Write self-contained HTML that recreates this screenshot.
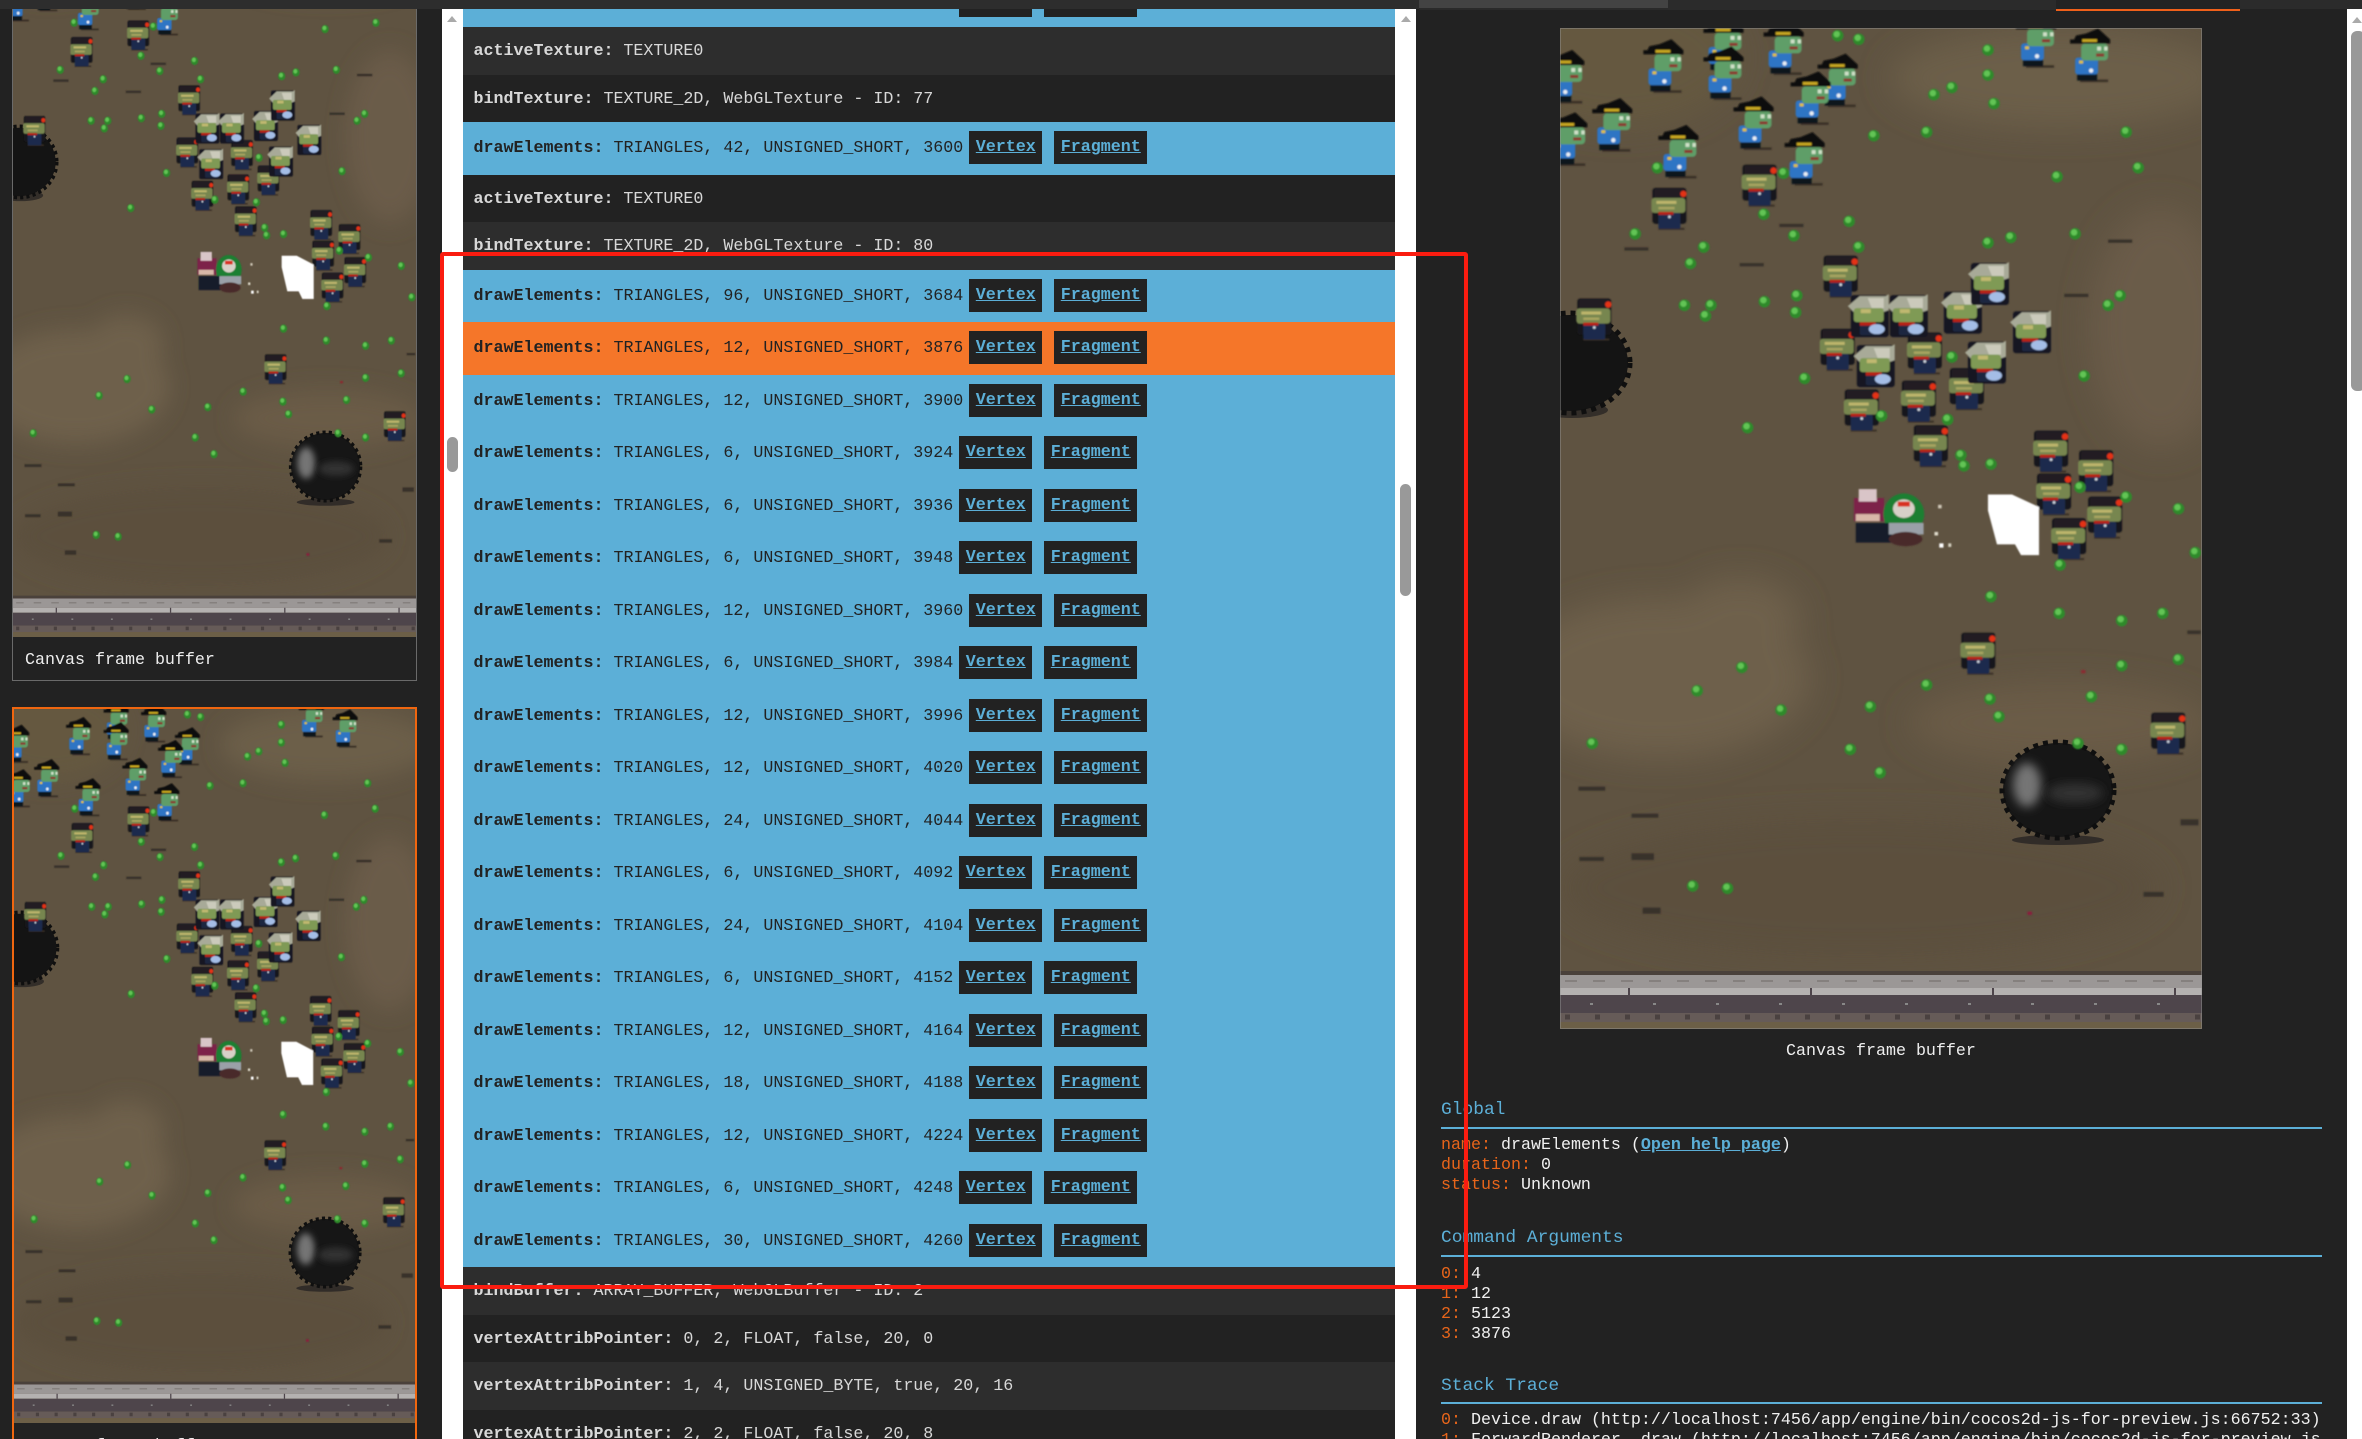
<!DOCTYPE html>
<html><head><meta charset="utf-8"><title>Spector capture</title>
<style>
html,body{margin:0;padding:0;background:#222;width:2362px;height:1439px;overflow:hidden}
body{position:relative;font-family:"Liberation Mono",monospace;color:#eee}
.a{position:absolute}
#list{position:absolute;left:463px;top:-25.5px;width:932px;height:1480px;overflow:hidden;font-size:16.67px}
.r{padding-left:10.5px;box-sizing:border-box;overflow:hidden;white-space:pre}
.d1,.d2{height:47.5px;line-height:49px;color:#d8d8d8}
.d1{background:#2d2d2d}.d2{background:#222}
.b,.o{height:52.5px;line-height:54px;color:#222}
.b{background:#5cafd7}.o{background:#f57629}
.r i{font-style:normal;display:inline-block;height:33px;line-height:33px;padding:0 6.5px;margin-left:6px;background:#222;color:#5cafd7;font-weight:bold;text-decoration:underline;vertical-align:middle}
.r i+i{margin-left:12px}
.sb{position:absolute;background:#fff}
.th{position:absolute;background:#999;border-radius:6px}
.ar{position:absolute;width:0;height:0;border-left:5px solid transparent;border-right:5px solid transparent;border-bottom:6px solid #aaa}
.h{position:absolute;left:1441px;font-size:17.9px;color:#5cafd7;line-height:24px;white-space:pre}
.l{position:absolute;left:1441px;width:881px;height:2px;background:#5cafd7}
.t{position:absolute;left:1441px;font-size:16.67px;line-height:20px;white-space:pre;color:#f0f0f0}
.t s{text-decoration:none;color:#e8651a}
.t u{color:#5cafd7;font-weight:bold}
.c{position:absolute;font-size:16.67px;color:#eee;white-space:pre;line-height:22px}
</style></head><body>

<svg width="0" height="0" style="position:absolute">
<defs>
<filter id="bl" x="-30%" y="-30%" width="160%" height="160%"><feGaussianBlur stdDeviation="16"/></filter>
<filter id="bs" x="-30%" y="-30%" width="160%" height="160%"><feGaussianBlur stdDeviation="5"/></filter>
<filter id="sf" x="-5%" y="-5%" width="110%" height="110%"><feGaussianBlur stdDeviation=".7"/></filter>
<g id="d0"><circle r="5.8" fill="#2f8a2c"/><circle cx="-1" cy="-1.5" r="3.2" fill="#62c454"/></g>
<use id="d" href="#d0" transform="scale(1.664 2.8)"/>
<use id="d7" href="#d0" transform="scale(2.24 3)"/>
<g id="p0">
<rect x="-10" y="26" width="28" height="2.5" fill="#3a3028"/>
<rect x="-13" y="20" width="20" height="7" fill="#10161e"/>
<rect x="-15" y="4" width="23" height="17" rx="3" fill="#2f74c4"/><circle cx="1" cy="17" r="2.2" fill="#e8eef4"/><rect x="-11" y="7" width="4" height="3" fill="#e0c040"/>
<rect x="-9" y="-10" width="27" height="17" rx="4" fill="#5f9e68"/><rect x="7" y="-7" width="4" height="4" fill="#cfe0c8"/><rect x="14" y="-7" width="3.5" height="4" fill="#cfe0c8"/><rect x="6" y="0" width="8" height="3" fill="#8a3a30"/>
<path d="M-20-10H20V-14L8-25-4-20-14-18-16-14H-20Z" fill="#0d0d0d"/><rect x="-8" y="-14.5" width="15" height="3" fill="#c9a820"/>
</g>
<use id="p" href="#p0" transform="scale(1.664 2.8)"/>
<g id="z0">
<rect x="-14" y="-21" width="34" height="36" rx="3" fill="#16151a"/>
<rect x="-8" y="19" width="26" height="2" fill="#3a3028"/>
<rect x="-8" y="4" width="22" height="16" rx="2" fill="#1f2c4e"/><circle cx="3" cy="8" r="1.4" fill="#cfd6e0"/>
<rect x="-12" y="-20" width="30" height="10" rx="2" fill="#211e22"/>
<rect x="-15" y="-11" width="34" height="15" rx="3" fill="#778650"/><rect x="-10" y="-8" width="20" height="3" fill="#bdb56c"/><rect x="-8" y="-2" width="16" height="2.5" fill="#a8a560"/>
<rect x="-8" y="3" width="15" height="3" fill="#b82418"/>
<circle cx="17" cy="-15" r="3.2" fill="#e43214"/>
</g>
<use id="z" href="#z0" transform="scale(1.664 2.8)"/>
<g id="w0">
<rect x="-17" y="-19" width="38" height="42" rx="3" fill="#171720"/>
<rect x="-8" y="10" width="22" height="11" rx="2" fill="#1b2540"/>
<path d="M-20-8-8-18H18L21-20V-4L10 0H-12Z" fill="#a8aa98"/><path d="M0-16H16V-6H4Z" fill="#cbcabb"/>
<rect x="-14" y="-6" width="30" height="14" rx="3" fill="#7f9a54"/><rect x="-7" y="-5" width="10" height="4" fill="#c0b870"/>
<rect x="-8" y="8" width="16" height="3.5" fill="#b82418"/>
<ellipse cx="9" cy="15" rx="8" ry="5" fill="#a4bde6"/>
</g>
<use id="w" href="#w0" transform="scale(1.664 2.8)"/>

<symbol id="scene" viewBox="0 0 642 1001" preserveAspectRatio="none">
<rect width="642" height="1001" fill="#5f5341"/>
<g filter="url(#bl)">
<ellipse cx="500" cy="50" rx="170" ry="50" fill="#6c5e4a"/>
<ellipse cx="600" cy="300" rx="70" ry="120" fill="#6a5c48"/>
<ellipse cx="100" cy="650" rx="150" ry="80" fill="#6e604b"/>
<ellipse cx="180" cy="590" rx="60" ry="40" fill="#6e604b"/>
<ellipse cx="500" cy="695" rx="150" ry="40" fill="#6a5c47"/>
<ellipse cx="60" cy="30" rx="120" ry="70" fill="#65583f"/>
<ellipse cx="300" cy="860" rx="300" ry="70" fill="#5c503d"/>
</g>
<!-- road -->
<rect y="943" width="642" height="4" fill="#4a413b"/>
<rect y="947" width="642" height="13" fill="#9b9796"/>
<path d="M5 953H642" stroke="#85807e" stroke-width="2" stroke-dasharray="12 16"/>
<rect y="960" width="642" height="7" fill="#b4b1b0"/>
<rect x="68" y="960" width="2" height="7" fill="#4d444a"/><rect x="250" y="960" width="2" height="7" fill="#4d444a"/><rect x="432" y="960" width="2" height="7" fill="#4d444a"/><rect x="614" y="960" width="2" height="7" fill="#4d444a"/>
<rect y="967" width="642" height="18" fill="#4e454b"/>
<path d="M30 976H642" stroke="#888" stroke-width="2" stroke-dasharray="3 60"/>
<rect y="985" width="642" height="9" fill="#665b58"/>
<path d="M5 989H642" stroke="#4a4140" stroke-width="5" stroke-dasharray="5 25"/>
<rect y="994" width="642" height="7" fill="#6c5f47"/>
<!-- balls -->
<ellipse cx="498" cy="812" rx="46" ry="5" fill="#312c28"/>
<ellipse cx="498" cy="762" rx="55" ry="47" fill="#161616"/>
<ellipse cx="498" cy="762" rx="56" ry="48" fill="none" stroke="#0f0f0f" stroke-width="5" stroke-dasharray="5 5"/>
<ellipse cx="467" cy="757" rx="14" ry="22" fill="#747474" filter="url(#bs)"/>
<ellipse cx="515" cy="765" rx="28" ry="10" fill="#303030" filter="url(#bs)"/>
<ellipse cx="12" cy="382" rx="36" ry="8" fill="#332e29"/>
<ellipse cx="10" cy="335" rx="58" ry="48" fill="#141414"/>
<ellipse cx="10" cy="335" rx="60" ry="50" fill="none" stroke="#0f0f0f" stroke-width="5" stroke-dasharray="5 5"/>
<g filter="url(#sf)">
<!-- sprites in upper section -->
<g transform="matrix(.601 0 0 .357 -140 -28)">
<g fill="#37302a"><rect x="598" y="627" width="40" height="9"/><rect x="340" y="693" width="40" height="9"/><rect x="532" y="737" width="40" height="9"/><rect x="1145" y="671" width="40" height="9"/><rect x="1072" y="823" width="40" height="9"/></g>
<use href="#p" x="405" y="180"/><use href="#p" x="505" y="120"/><use href="#p" x="505" y="200"/><use href="#p" x="605" y="130"/><use href="#p" x="320" y="345"/><use href="#p" x="555" y="340"/><use href="#p" x="430" y="420"/><use href="#p" x="695" y="220"/><use href="#p" x="650" y="270"/><use href="#p" x="640" y="440"/><use href="#p" x="1025" y="110"/><use href="#p" x="1115" y="150"/><use href="#p" x="240" y="210"/><use href="#p" x="245" y="385"/>
<use href="#z" x="560" y="520"/><use href="#z" x="410" y="585"/><use href="#z" x="695" y="775"/><use href="#z" x="285" y="895"/><use href="#z" x="690" y="980"/><use href="#z" x="835" y="990"/><use href="#z" x="905" y="1090"/><use href="#z" x="825" y="1125"/><use href="#z" x="730" y="1150"/><use href="#z" x="845" y="1250"/><use href="#z" x="1045" y="1265"/><use href="#z" x="1120" y="1320"/><use href="#z" x="1050" y="1385"/><use href="#z" x="1135" y="1450"/><use href="#z" x="1075" y="1510"/><use href="#z" x="924" y="1831"/><use href="#z" x="1240" y="2055"/>
<use href="#w" x="745" y="880"/><use href="#w" x="810" y="880"/><use href="#w" x="900" y="870"/><use href="#w" x="945" y="790"/><use href="#w" x="1015" y="925"/><use href="#w" x="755" y="1020"/><use href="#w" x="940" y="1010"/>
<use href="#d" x="945" y="140"/><use href="#d" x="945" y="210"/><use href="#d" x="955" y="290"/><use href="#d" x="855" y="265"/><use href="#d" x="885" y="245"/><use href="#d" x="730" y="110"/><use href="#d" x="695" y="100"/><use href="#d" x="755" y="380"/><use href="#d" x="843" y="370"/><use href="#d" x="1175" y="370"/><use href="#d" x="1195" y="470"/><use href="#d" x="1060" y="495"/><use href="#d" x="605" y="485"/><use href="#d" x="395" y="470"/><use href="#d" x="572" y="600"/><use href="#d" x="714" y="620"/><use href="#d" x="622" y="660"/><use href="#d" x="730" y="692"/><use href="#d" x="358" y="655"/><use href="#d" x="472" y="692"/><use href="#d" x="450" y="738"/><use href="#d" x="945" y="680"/><use href="#d" x="983" y="665"/><use href="#d" x="1090" y="655"/><use href="#d" x="1165" y="828"/><use href="#d" x="1145" y="855"/><use href="#d" x="440" y="855"/><use href="#d" x="484" y="855"/><use href="#d" x="475" y="885"/><use href="#d" x="573" y="845"/><use href="#d" x="627" y="828"/><use href="#d" x="625" y="875"/><use href="#d" x="640" y="1060"/><use href="#d" x="1105" y="1053"/><use href="#d" x="545" y="1198"/><use href="#d" x="768" y="1165"/><use href="#d" x="878" y="1175"/><use href="#d" x="900" y="1275"/><use href="#d" x="905" y="1305"/><use href="#d" x="950" y="1300"/><use href="#d" x="1098" y="1365"/><use href="#d" x="1175" y="1392"/><use href="#d" x="1262" y="1425"/><use href="#d" x="1290" y="1548"/><use href="#d" x="885" y="1000"/>
<!-- hero -->
<rect x="722" y="1395" width="50" height="65" fill="#7d2048"/><rect x="730" y="1370" width="30" height="35" fill="#d9c5c8"/><rect x="725" y="1440" width="40" height="20" fill="#d8b8a8"/>
<ellipse cx="805" cy="1440" rx="34" ry="58" fill="#1f7f32"/><ellipse cx="805" cy="1425" rx="18" ry="26" fill="#d8d0c8"/><rect x="795" y="1405" width="20" height="14" fill="#d83020"/>
<rect x="725" y="1465" width="60" height="55" fill="#171d2c"/><rect x="780" y="1465" width="58" height="32" fill="#9aa0a8"/><ellipse cx="808" cy="1510" rx="28" ry="20" fill="#4a2a2a"/>
<!-- splat -->
<path d="M945 1385H985L1030 1420V1555H1000L990 1525H960L945 1430Z" fill="#fff"/>
<rect x="862" y="1414" width="6" height="10" fill="#cfc8b8"/><rect x="856" y="1490" width="6" height="10" fill="#e0dccc"/><rect x="864" y="1522" width="7" height="12" fill="#fff"/><rect x="879" y="1522" width="5" height="10" fill="#d8d4c4"/>
</g>
<!-- lower section -->
<g transform="matrix(.4464 0 0 .3333 -20 532)">
<g fill="#37302a"><rect x="86" y="680" width="60" height="12"/><rect x="205" y="761" width="60" height="12"/><rect x="88" y="891" width="55" height="12"/><rect x="205" y="880" width="50" height="20"/><rect x="230" y="1043" width="40" height="18"/><rect x="1435" y="778" width="40" height="18"/><rect x="1352" y="996" width="45" height="14"/><rect x="1450" y="212" width="30" height="10"/></g>
<use href="#d7" x="1165" y="15"/><use href="#d7" x="1010" y="110"/><use href="#d7" x="1163" y="160"/><use href="#d7" x="1303" y="182"/><use href="#d7" x="1395" y="160"/><use href="#d7" x="1430" y="298"/><use href="#d7" x="1303" y="317"/><use href="#d7" x="1235" y="410"/><use href="#d7" x="1008" y="417"/><use href="#d7" x="1028" y="470"/><use href="#d7" x="866" y="375"/><use href="#d7" x="740" y="440"/><use href="#d7" x="452" y="322"/><use href="#d7" x="352" y="392"/><use href="#d7" x="540" y="450"/><use href="#d7" x="117" y="550"/><use href="#d7" x="695" y="568"/><use href="#d7" x="762" y="638"/><use href="#d7" x="1205" y="550"/><use href="#d7" x="1303" y="568"/><use href="#d7" x="342" y="978"/><use href="#d7" x="420" y="985"/>
<rect x="1092" y="1055" width="10" height="10" fill="#8a1c3c"/><rect x="1212" y="330" width="10" height="10" fill="#8a2c30"/>
</g>
</g>
</symbol>
</defs>
</svg>

<!-- Left thumbnails -->
<svg class="a" style="left:13px;top:9px" width="403" height="628" viewBox="0 0 403 628"><use href="#scene" x="0" y="-86" width="403" height="714"/></svg>
<div class="a" style="left:12px;top:9px;width:403px;height:671px;border:1px solid #6a6a6a;border-top:0"></div>
<div class="c" style="left:25px;top:650px">Canvas frame buffer</div>

<svg class="a" style="left:14px;top:709px" width="401" height="714" viewBox="0 0 401 714"><use href="#scene" x="0" y="0" width="401" height="714"/></svg>
<div class="a" style="left:12px;top:707px;width:401px;height:760px;border:2px solid #f0660f"></div>
<div class="c" style="left:25px;top:1436px">Canvas frame buffer</div>

<!-- Scroll tracks -->
<div class="sb" style="left:442px;top:9px;width:21px;height:1430px"></div>
<div class="sb" style="left:1395px;top:9px;width:21px;height:1430px"></div>
<div class="ar" style="left:447px;top:16px"></div>
<div class="ar" style="left:1401px;top:16px"></div>
<div class="th" style="left:447px;top:437px;width:11px;height:35px"></div>
<div class="th" style="left:1400px;top:484px;width:11px;height:112px"></div>

<!-- Command list -->
<div id="list"><div class="r b"><b>drawElements:</b> TRIANGLES, 6, UNSIGNED_SHORT, 3588<i>Vertex</i><i>Fragment</i></div><div class="r d1"><b>activeTexture:</b> TEXTURE0</div><div class="r d2"><b>bindTexture:</b> TEXTURE_2D, WebGLTexture - ID: 77</div><div class="r b"><b>drawElements:</b> TRIANGLES, 42, UNSIGNED_SHORT, 3600<i>Vertex</i><i>Fragment</i></div><div class="r d2"><b>activeTexture:</b> TEXTURE0</div><div class="r d1"><b>bindTexture:</b> TEXTURE_2D, WebGLTexture - ID: 80</div><div class="r b"><b>drawElements:</b> TRIANGLES, 96, UNSIGNED_SHORT, 3684<i>Vertex</i><i>Fragment</i></div><div class="r o"><b>drawElements:</b> TRIANGLES, 12, UNSIGNED_SHORT, 3876<i>Vertex</i><i>Fragment</i></div><div class="r b"><b>drawElements:</b> TRIANGLES, 12, UNSIGNED_SHORT, 3900<i>Vertex</i><i>Fragment</i></div><div class="r b"><b>drawElements:</b> TRIANGLES, 6, UNSIGNED_SHORT, 3924<i>Vertex</i><i>Fragment</i></div><div class="r b"><b>drawElements:</b> TRIANGLES, 6, UNSIGNED_SHORT, 3936<i>Vertex</i><i>Fragment</i></div><div class="r b"><b>drawElements:</b> TRIANGLES, 6, UNSIGNED_SHORT, 3948<i>Vertex</i><i>Fragment</i></div><div class="r b"><b>drawElements:</b> TRIANGLES, 12, UNSIGNED_SHORT, 3960<i>Vertex</i><i>Fragment</i></div><div class="r b"><b>drawElements:</b> TRIANGLES, 6, UNSIGNED_SHORT, 3984<i>Vertex</i><i>Fragment</i></div><div class="r b"><b>drawElements:</b> TRIANGLES, 12, UNSIGNED_SHORT, 3996<i>Vertex</i><i>Fragment</i></div><div class="r b"><b>drawElements:</b> TRIANGLES, 12, UNSIGNED_SHORT, 4020<i>Vertex</i><i>Fragment</i></div><div class="r b"><b>drawElements:</b> TRIANGLES, 24, UNSIGNED_SHORT, 4044<i>Vertex</i><i>Fragment</i></div><div class="r b"><b>drawElements:</b> TRIANGLES, 6, UNSIGNED_SHORT, 4092<i>Vertex</i><i>Fragment</i></div><div class="r b"><b>drawElements:</b> TRIANGLES, 24, UNSIGNED_SHORT, 4104<i>Vertex</i><i>Fragment</i></div><div class="r b"><b>drawElements:</b> TRIANGLES, 6, UNSIGNED_SHORT, 4152<i>Vertex</i><i>Fragment</i></div><div class="r b"><b>drawElements:</b> TRIANGLES, 12, UNSIGNED_SHORT, 4164<i>Vertex</i><i>Fragment</i></div><div class="r b"><b>drawElements:</b> TRIANGLES, 18, UNSIGNED_SHORT, 4188<i>Vertex</i><i>Fragment</i></div><div class="r b"><b>drawElements:</b> TRIANGLES, 12, UNSIGNED_SHORT, 4224<i>Vertex</i><i>Fragment</i></div><div class="r b"><b>drawElements:</b> TRIANGLES, 6, UNSIGNED_SHORT, 4248<i>Vertex</i><i>Fragment</i></div><div class="r b"><b>drawElements:</b> TRIANGLES, 30, UNSIGNED_SHORT, 4260<i>Vertex</i><i>Fragment</i></div><div class="r d1"><b>bindBuffer:</b> ARRAY_BUFFER, WebGLBuffer - ID: 2</div><div class="r d2"><b>vertexAttribPointer:</b> 0, 2, FLOAT, false, 20, 0</div><div class="r d1"><b>vertexAttribPointer:</b> 1, 4, UNSIGNED_BYTE, true, 20, 16</div><div class="r d2"><b>vertexAttribPointer:</b> 2, 2, FLOAT, false, 20, 8</div></div>

<!-- Top bar -->
<div class="a" style="left:0;top:0;width:1419px;height:9px;background:#2d2d2d"></div>
<div class="a" style="left:1419px;top:0;width:249px;height:10px;background:#2a2a2a"></div>
<div class="a" style="left:1419px;top:0;width:249px;height:8px;background:#434343"></div>
<div class="a" style="left:1668px;top:0;width:388px;height:10px;background:#2b2b2b"></div>
<div class="a" style="left:2056px;top:0;width:184px;height:9px;background:#232323"></div>
<div class="a" style="left:2056px;top:9px;width:184px;height:2px;background:#f0601a"></div>
<div class="a" style="left:2240px;top:0;width:122px;height:9px;background:#2b2b2b"></div>

<!-- Right panel -->
<svg class="a" style="left:1560px;top:28px" width="642" height="1001" viewBox="0 0 642 1001"><use href="#scene" x="0" y="0" width="642" height="1001"/></svg>
<div class="a" style="left:1560px;top:28px;border:1px solid rgba(150,150,150,.45);width:640px;height:999px"></div>
<div class="c" style="left:1786px;top:1041px">Canvas frame buffer</div>

<div class="h" style="top:1098px">Global</div>
<div class="l" style="top:1127px"></div>
<div class="t" style="top:1136px"><s>name:</s> drawElements (<u>Open help page</u>)
<s>duration:</s> 0
<s>status:</s> Unknown</div>

<div class="h" style="top:1226px">Command Arguments</div>
<div class="l" style="top:1255px"></div>
<div class="t" style="top:1265px"><s>0:</s> 4
<s>1:</s> 12
<s>2:</s> 5123
<s>3:</s> 3876</div>

<div class="h" style="top:1374px">Stack Trace</div>
<div class="l" style="top:1402px"></div>
<div class="t" style="top:1411px;width:881px;overflow:hidden"><s>0:</s> Device.draw (http://localhost:7456/app/engine/bin/cocos2d-js-for-preview.js:66752:33)
<s>1:</s> ForwardRenderer._draw (http://localhost:7456/app/engine/bin/cocos2d-js-for-preview.js</div>

<!-- Right scrollbar -->
<div class="sb" style="left:2347px;top:9px;width:15px;height:1430px"></div>
<div class="ar" style="left:2352px;top:17px"></div>
<div class="th" style="left:2351px;top:31px;width:14px;height:360px"></div>

<!-- Red annotation -->
<div class="a" style="left:463px;top:252px;width:932px;height:17px;background:#2d2d2d"></div>
<div class="a" style="left:440px;top:252px;width:1020px;height:1029px;border:4px solid #fa1c10;border-radius:3px"></div>
</body></html>
